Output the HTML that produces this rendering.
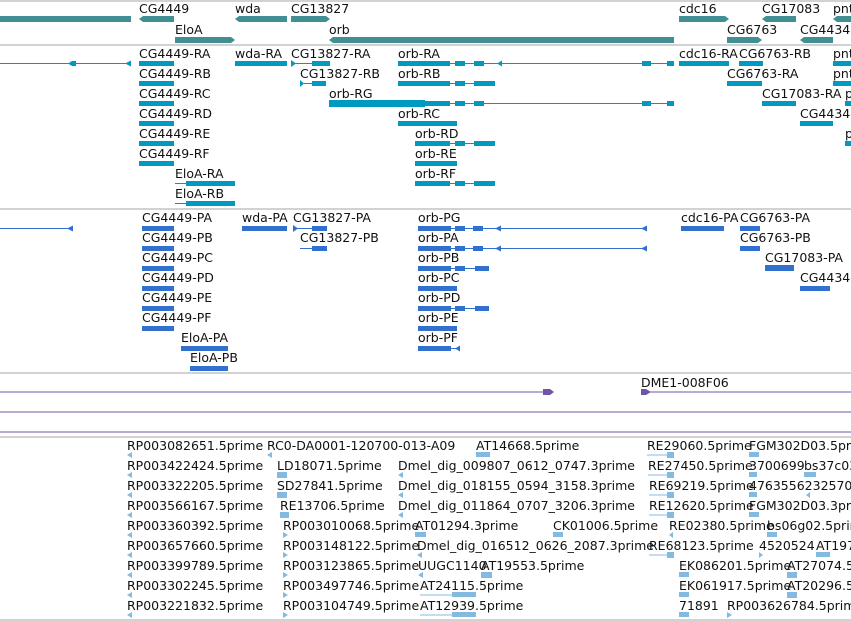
<!DOCTYPE html>
<html><head><meta charset="utf-8"><style>
html,body{margin:0;padding:0;background:#fff;width:851px;height:621px;overflow:hidden}
svg{display:block}
text{font-family:"DejaVu Sans","Liberation Sans",sans-serif;font-size:12.5px;fill:#111}
.g{fill:#418f93}.t{fill:#0099c0}.p{fill:#3270d0}.e{fill:#84b9e0}.v{fill:#7054a8}
.sep{stroke:#c4c4c4;stroke-width:1.5}
</style></head><body>
<svg width="851" height="621" viewBox="0 0 851 621">
<line class="sep" x1="0" y1="1" x2="851" y2="1"/>
<line class="sep" x1="0" y1="45" x2="851" y2="45"/>
<line class="sep" x1="0" y1="209" x2="851" y2="209"/>
<line class="sep" x1="0" y1="373" x2="851" y2="373"/>
<line class="sep" x1="0" y1="437" x2="851" y2="437"/>
<line class="sep" x1="0" y1="620" x2="851" y2="620"/>

<g>
<text x="139" y="13">CG4449</text><text x="235" y="13">wda</text><text x="291" y="13">CG13827</text>
<text x="679" y="13">cdc16</text><text x="762" y="13">CG17083</text><text x="833" y="13">pnt</text>
<text x="175" y="34">EloA</text><text x="329" y="34">orb</text><text x="727" y="34">CG6763</text><text x="800" y="34">CG4434</text>
<g class="g">
<rect x="0" y="16" width="131" height="6"/>
<polygon points="139,19 143,16 174,16 174,22 143,22"/>
<polygon points="235,19 239,16 287,16 287,22 239,22"/>
<polygon points="291,16 326,16 330,19 326,22 291,22"/>
<polygon points="679,16 725,16 729,19 725,22 679,22"/>
<polygon points="762,19 766,16 796,16 796,22 766,22"/>
<polygon points="833,19 837,16 851,16 851,22 837,22"/>
<polygon points="175,37 231,37 235,40 231,43 175,43"/>
<polygon points="329,40 333,37 674,37 674,43 333,43"/>
<polygon points="727,37 758,37 762,40 758,43 727,43"/>
<polygon points="800,40 804,37 833,37 833,43 804,43"/>
</g></g>

<g>
<text x="139" y="58">CG4449-RA</text><text x="235" y="58">wda-RA</text><text x="291" y="58">CG13827-RA</text><text x="398" y="58">orb-RA</text><text x="679" y="58">cdc16-RA</text><text x="739" y="58">CG6763-RB</text><text x="833" y="58">pnt</text>
<text x="139" y="78">CG4449-RB</text><text x="300" y="78">CG13827-RB</text><text x="398" y="78">orb-RB</text><text x="727" y="78">CG6763-RA</text><text x="833" y="78">pnt</text>
<text x="139" y="98">CG4449-RC</text><text x="329" y="98">orb-RG</text><text x="762" y="98">CG17083-RA</text><text x="845" y="98">p</text>
<text x="139" y="118">CG4449-RD</text><text x="398" y="118">orb-RC</text><text x="800" y="118">CG4434-</text>
<text x="139" y="138">CG4449-RE</text><text x="415" y="138">orb-RD</text><text x="845" y="138">p</text>
<text x="139" y="158">CG4449-RF</text><text x="415" y="158">orb-RE</text>
<text x="175" y="178">EloA-RA</text><text x="415" y="178">orb-RF</text>
<text x="175" y="198">EloA-RB</text>
<g class="t">
<rect x="0" y="63" width="131" height="1"/><polygon points="68,63.5 72,61 76,61 76,66 72,66"/><polygon points="125,63.5 131,60.5 131,66.5"/>
<rect x="139" y="61" width="35" height="5"/><rect x="235" y="61" width="52" height="5"/>
<rect x="291" y="63" width="36" height="1"/><polygon points="291,60 296,63.5 291,67"/><rect x="312" y="61" width="18" height="5"/>
<rect x="398" y="63" width="276" height="1"/><rect x="398" y="61" width="52" height="5"/><rect x="455" y="61" width="10" height="5"/><rect x="474" y="61" width="10" height="5"/><polygon points="497,63.5 502,60.5 502,66.5"/><rect x="642" y="61" width="9" height="5"/><rect x="667" y="61" width="7" height="5"/>
<rect x="679" y="61" width="50" height="5"/><rect x="739" y="61" width="24" height="5"/><rect x="833" y="61" width="18" height="5"/>
<rect x="139" y="81" width="35" height="5"/><rect x="300" y="83" width="26" height="1"/><rect x="312" y="81" width="14" height="5"/><polygon points="300,80 304,83.5 300,87"/>
<rect x="398" y="83" width="97" height="1"/><rect x="398" y="81" width="52" height="5"/><rect x="455" y="81" width="10" height="5"/><rect x="474" y="81" width="21" height="5"/>
<rect x="727" y="81" width="35" height="5"/><rect x="833" y="81" width="18" height="5"/>
<rect x="139" y="101" width="35" height="5"/><rect x="329" y="103" width="345" height="1"/><rect x="329" y="100" width="96" height="7"/><rect x="425" y="101" width="25" height="5"/><rect x="455" y="101" width="10" height="5"/><rect x="474" y="101" width="10" height="5"/><rect x="642" y="101" width="9" height="5"/><rect x="667" y="101" width="7" height="5"/>
<rect x="762" y="101" width="34" height="5"/><rect x="845" y="101" width="6" height="5"/>
<rect x="139" y="121" width="35" height="5"/><rect x="398" y="121" width="59" height="5"/><rect x="800" y="121" width="33" height="5"/>
<rect x="139" y="141" width="35" height="5"/><rect x="415" y="143" width="80" height="1"/><rect x="415" y="141" width="35" height="5"/><rect x="455" y="141" width="10" height="5"/><rect x="474" y="141" width="21" height="5"/><rect x="845" y="141" width="6" height="5"/>
<rect x="139" y="161" width="35" height="5"/><rect x="415" y="161" width="42" height="5"/>
<rect x="175" y="183" width="60" height="1"/><rect x="186" y="181" width="49" height="5"/><rect x="415" y="183" width="80" height="1"/><rect x="415" y="181" width="35" height="5"/><rect x="455" y="181" width="10" height="5"/><rect x="474" y="181" width="21" height="5"/>
<rect x="175" y="203" width="60" height="1"/><rect x="186" y="201" width="49" height="5"/>
</g></g>

<g>
<text x="142" y="222">CG4449-PA</text><text x="242" y="222">wda-PA</text><text x="293" y="222">CG13827-PA</text><text x="418" y="222">orb-PG</text><text x="681" y="222">cdc16-PA</text><text x="740" y="222">CG6763-PA</text>
<text x="142" y="242">CG4449-PB</text><text x="300" y="242">CG13827-PB</text><text x="418" y="242">orb-PA</text><text x="740" y="242">CG6763-PB</text>
<text x="142" y="262">CG4449-PC</text><text x="418" y="262">orb-PB</text><text x="765" y="262">CG17083-PA</text>
<text x="142" y="282">CG4449-PD</text><text x="418" y="282">orb-PC</text><text x="800" y="282">CG4434-</text>
<text x="142" y="302">CG4449-PE</text><text x="418" y="302">orb-PD</text>
<text x="142" y="322">CG4449-PF</text><text x="418" y="322">orb-PE</text>
<text x="181" y="342">EloA-PA</text><text x="418" y="342">orb-PF</text>
<text x="190" y="362">EloA-PB</text>
<g class="p">
<rect x="0" y="228" width="73" height="1"/><polygon points="67,228.5 73,225.5 73,231.5"/>
<rect x="142" y="226" width="32" height="5"/><rect x="242" y="226" width="45" height="5"/>
<rect x="293" y="228" width="34" height="1"/><rect x="312" y="226" width="15" height="5"/><polygon points="293,225 298,228.5 293,232"/>
<rect x="418" y="228" width="229" height="1"/><rect x="418" y="226" width="33" height="5"/><rect x="455" y="226" width="10" height="5"/><rect x="473" y="226" width="10" height="5"/><polygon points="495,228.5 501,225.5 501,231.5"/><polygon points="641,228.5 647,225.5 647,231.5"/>
<rect x="681" y="226" width="43" height="5"/><rect x="740" y="226" width="20" height="5"/>
<rect x="142" y="246" width="32" height="5"/><rect x="300" y="248" width="27" height="1"/><rect x="312" y="246" width="15" height="5"/>
<rect x="418" y="248" width="229" height="1"/><rect x="418" y="246" width="33" height="5"/><rect x="455" y="246" width="10" height="5"/><rect x="473" y="246" width="10" height="5"/><polygon points="495,248.5 501,245.5 501,251.5"/><polygon points="641,248.5 647,245.5 647,251.5"/>
<rect x="740" y="246" width="20" height="5"/>
<rect x="142" y="266" width="32" height="5"/><rect x="418" y="268" width="71" height="1"/><rect x="418" y="266" width="33" height="5"/><rect x="455" y="266" width="10" height="5"/><rect x="475" y="266" width="14" height="5"/><rect x="765" y="265" width="29" height="6"/>
<rect x="142" y="286" width="32" height="5"/><rect x="418" y="286" width="39" height="5"/><rect x="800" y="286" width="30" height="5"/>
<rect x="142" y="306" width="32" height="5"/><rect x="418" y="308" width="71" height="1"/><rect x="418" y="306" width="33" height="5"/><rect x="455" y="306" width="10" height="5"/><rect x="475" y="306" width="14" height="5"/>
<rect x="142" y="326" width="32" height="5"/><rect x="418" y="326" width="39" height="5"/>
<rect x="181" y="346" width="47" height="5"/><rect x="418" y="348" width="42" height="1"/><rect x="418" y="346" width="33" height="5"/><polygon points="455,348.5 460,345.5 460,351.5"/>
<rect x="190" y="366" width="38" height="5"/>
</g></g>

<text x="641" y="387">DME1-008F06</text>
<g class="v">
<rect x="0" y="391.5" width="545" height="1"/><polygon points="543,389 550,389 554,392 550,395 543,395"/>
<polygon points="641,389 646,389 651,392 646,395 641,395"/><rect x="646" y="391.5" width="205" height="1"/>
<rect x="0" y="411.5" width="851" height="1"/><rect x="0" y="431.5" width="851" height="1"/>
</g>

<g>
<text x="127" y="450">RP003082651.5prime</text><text x="267" y="450">RC0-DA0001-120700-013-A09</text><text x="476" y="450">AT14668.5prime</text><text x="647" y="450">RE29060.5prime</text><text x="749" y="450">FGM302D03.5prime</text>
<text x="127" y="470">RP003422424.5prime</text><text x="277" y="470">LD18071.5prime</text><text x="398" y="470">Dmel_dig_009807_0612_0747.3prime</text><text x="648" y="470">RE27450.5prime</text><text x="749" y="470">3700699</text><text x="804" y="470">bs37c03</text>
<text x="127" y="490">RP003322205.5prime</text><text x="277" y="490">SD27841.5prime</text><text x="398" y="490">Dmel_dig_018155_0594_3158.3prime</text><text x="649" y="490">RE69219.5prime</text><text x="749" y="490">4763556232570</text>
<text x="127" y="510">RP003566167.5prime</text><text x="280" y="510">RE13706.5prime</text><text x="398" y="510">Dmel_dig_011864_0707_3206.3prime</text><text x="649" y="510">RE12620.5prime</text><text x="749" y="510">FGM302D03.3prime</text>
<text x="127" y="530">RP003360392.5prime</text><text x="283" y="530">RP003010068.5prime</text><text x="415" y="530">AT01294.3prime</text><text x="553" y="530">CK01006.5prime</text><text x="669" y="530">RE02380.5prime</text><text x="767" y="530">bs06g02.5prime</text>
<text x="127" y="550">RP003657660.5prime</text><text x="283" y="550">RP003148122.5prime</text><text x="417" y="550">Dmel_dig_016512_0626_2087.3prime</text><text x="649" y="550">RE68123.5prime</text><text x="759" y="550">4520524</text><text x="816" y="550">AT197</text>
<text x="127" y="570">RP003399789.5prime</text><text x="283" y="570">RP003123865.5prime</text><text x="418" y="570">UUGC1140</text><text x="481" y="570">AT19553.5prime</text><text x="679" y="570">EK086201.5prime</text><text x="787" y="570">AT27074.5</text>
<text x="127" y="590">RP003302245.5prime</text><text x="283" y="590">RP003497746.5prime</text><text x="420" y="590">AT24115.5prime</text><text x="679" y="590">EK061917.5prime</text><text x="787" y="590">AT20296.5</text>
<text x="127" y="610">RP003221832.5prime</text><text x="283" y="610">RP003104749.5prime</text><text x="420" y="610">AT12939.5prime</text><text x="679" y="610">71891</text><text x="727" y="610">RP003626784.5prime</text>
<g class="e">
<polygon points="127,455 132,452 132,458"/><polygon points="127,475 132,472 132,478"/><polygon points="127,495 132,492 132,498"/><polygon points="127,515 132,512 132,518"/><polygon points="127,535 132,532 132,538"/><polygon points="127,555 132,552 132,558"/><polygon points="127,575 132,572 132,578"/><polygon points="127,595 132,592 132,598"/><polygon points="127,615 132,612 132,618"/>
<polygon points="267,455 272,452 272,458"/><rect x="277" y="472" width="10" height="6"/><rect x="277" y="492" width="10" height="6"/><rect x="280" y="512" width="9" height="6"/>
<polygon points="283,532 288,535 283,538"/><polygon points="283,552 288,555 283,558"/><polygon points="283,572 288,575 283,578"/><polygon points="283,592 288,595 283,598"/><polygon points="283,612 288,615 283,618"/>
<rect x="476" y="452" width="14" height="5"/><polygon points="398,475 403,472 403,478"/><polygon points="398,495 403,492 403,498"/><polygon points="398,515 403,512 403,518"/>
<rect x="415" y="532" width="11" height="5"/><polygon points="417,555 422,552 422,558"/><polygon points="418,575 423,572 423,578"/><rect x="481" y="572" width="11" height="6"/>
<rect x="420" y="594.5" width="56" height="1"/><rect x="452" y="592" width="24" height="5"/><rect x="420" y="614.5" width="56" height="1"/><rect x="452" y="612" width="24" height="5"/>
<rect x="553" y="532" width="10" height="5"/>
<rect x="647" y="454.5" width="27" height="1"/><rect x="667" y="452" width="7" height="6"/><rect x="648" y="474.5" width="26" height="1"/><rect x="667" y="472" width="7" height="6"/><rect x="649" y="494.5" width="25" height="1"/><rect x="667" y="492" width="7" height="6"/><rect x="649" y="514.5" width="25" height="1"/><rect x="667" y="512" width="7" height="6"/>
<polygon points="669,535 673,532 673,538"/><rect x="649" y="554.5" width="25" height="1"/><rect x="667" y="552" width="7" height="6"/>
<rect x="679" y="572" width="10" height="5"/><rect x="679" y="592" width="10" height="5"/><rect x="679" y="612" width="10" height="5"/><polygon points="727,612 732,615 727,618"/>
<rect x="749" y="452" width="10" height="5"/><rect x="749" y="472" width="8" height="5"/><rect x="749" y="492" width="8" height="5"/><rect x="749" y="512" width="10" height="5"/>
<rect x="804" y="472" width="12" height="5"/><polygon points="806,495 810,492 810,498"/><rect x="767" y="532" width="10" height="5"/><polygon points="759,552 763,555 759,558"/><rect x="816" y="552" width="14" height="5"/>
<rect x="787" y="572" width="10" height="6"/><rect x="787" y="592" width="10" height="6"/>
</g></g>
</svg>
</body></html>
